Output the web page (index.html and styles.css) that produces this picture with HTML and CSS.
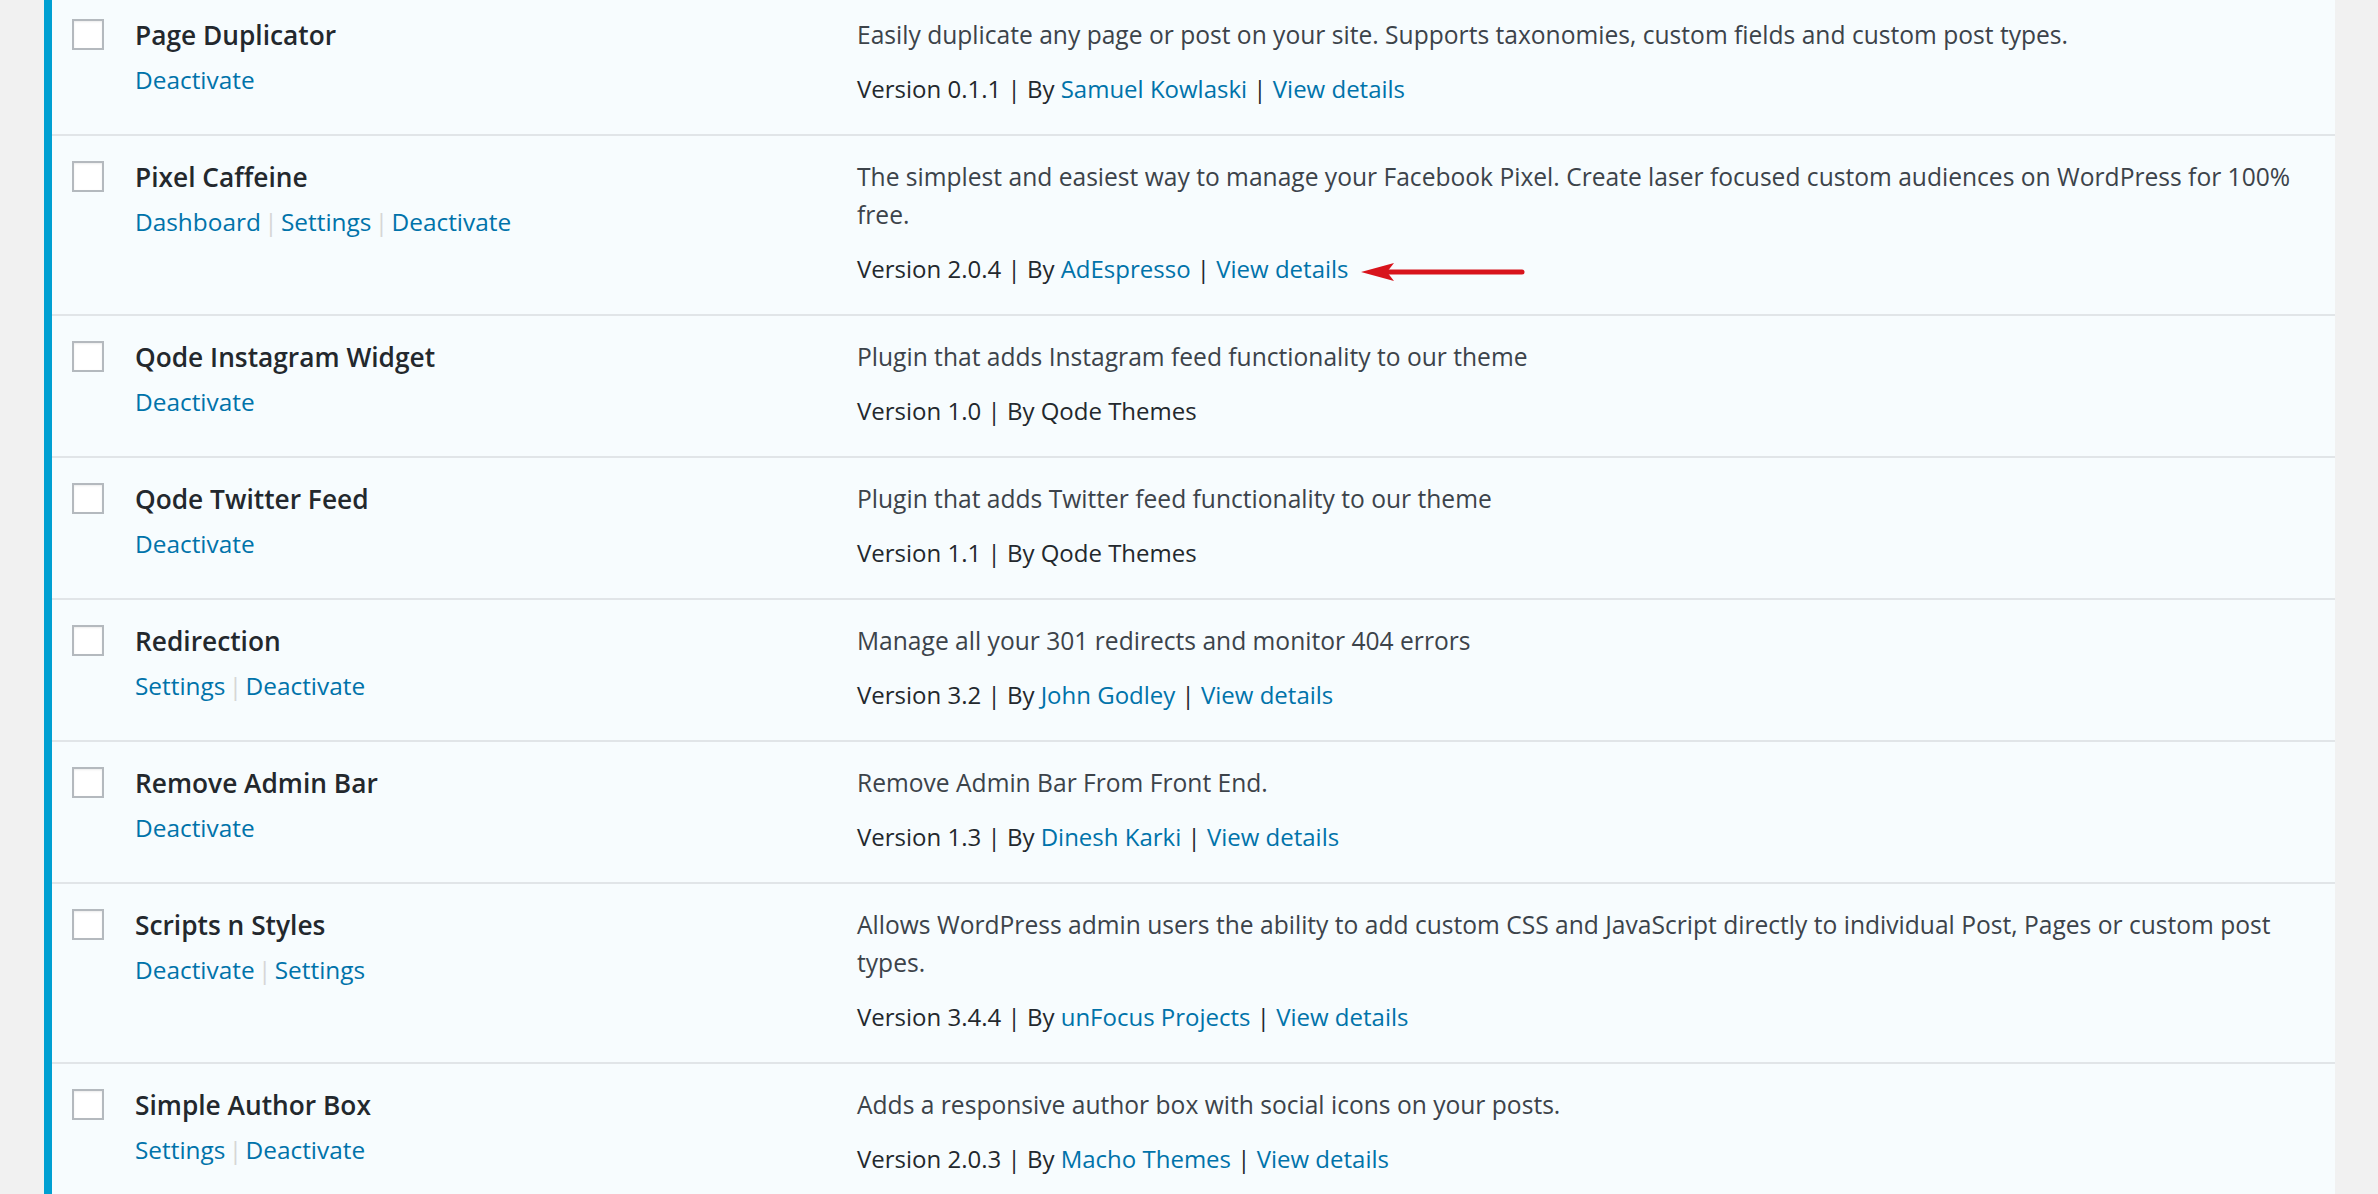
FILE: index.html
```html
<!DOCTYPE html>
<html lang="en">
<head>
<meta charset="utf-8">
<title>Plugins</title>
<link rel="stylesheet" href="styles.css">
</head>
<body>
<div class="plugins">
  <div class="plugin">
    <div class="check-col"><input type="checkbox" class="check"></div>
    <div class="title-col">
      <strong class="name">Page Duplicator</strong>
      <div class="actions"><a href="#">Deactivate</a></div>
    </div>
    <div class="desc-col">
      <p class="desc">Easily duplicate any page or post on your site. Supports taxonomies, custom fields and custom post types.</p>
      <div class="meta">Version 0.1.1 | By <a href="#">Samuel Kowlaski</a> | <a href="#">View details</a></div>
    </div>
  </div>

  <div class="plugin">
    <div class="check-col"><input type="checkbox" class="check"></div>
    <div class="title-col">
      <strong class="name">Pixel Caffeine</strong>
      <div class="actions"><a href="#">Dashboard</a> <span class="sep">|</span> <a href="#">Settings</a> <span class="sep">|</span> <a href="#">Deactivate</a></div>
    </div>
    <div class="desc-col">
      <p class="desc">The simplest and easiest way to manage your Facebook Pixel. Create laser focused custom audiences on WordPress for 100% free.</p>
      <div class="meta">Version 2.0.4 | By <a href="#">AdEspresso</a> | <a href="#">View details</a><svg class="arrow" width="164" height="22" viewBox="0 0 164 22"><path d="M0 11 L33 2 L26 11 L33 20 Z" fill="#d8141c"/><line x1="24" y1="11" x2="161" y2="11" stroke="#d8141c" stroke-width="5" stroke-linecap="round"/></svg></div>
    </div>
  </div>

  <div class="plugin">
    <div class="check-col"><input type="checkbox" class="check"></div>
    <div class="title-col">
      <strong class="name">Qode Instagram Widget</strong>
      <div class="actions"><a href="#">Deactivate</a></div>
    </div>
    <div class="desc-col">
      <p class="desc">Plugin that adds Instagram feed functionality to our theme</p>
      <div class="meta">Version 1.0 | By Qode Themes</div>
    </div>
  </div>

  <div class="plugin">
    <div class="check-col"><input type="checkbox" class="check"></div>
    <div class="title-col">
      <strong class="name">Qode Twitter Feed</strong>
      <div class="actions"><a href="#">Deactivate</a></div>
    </div>
    <div class="desc-col">
      <p class="desc">Plugin that adds Twitter feed functionality to our theme</p>
      <div class="meta">Version 1.1 | By Qode Themes</div>
    </div>
  </div>

  <div class="plugin">
    <div class="check-col"><input type="checkbox" class="check"></div>
    <div class="title-col">
      <strong class="name">Redirection</strong>
      <div class="actions"><a href="#">Settings</a> <span class="sep">|</span> <a href="#">Deactivate</a></div>
    </div>
    <div class="desc-col">
      <p class="desc">Manage all your 301 redirects and monitor 404 errors</p>
      <div class="meta">Version 3.2 | By <a href="#">John Godley</a> | <a href="#">View details</a></div>
    </div>
  </div>

  <div class="plugin">
    <div class="check-col"><input type="checkbox" class="check"></div>
    <div class="title-col">
      <strong class="name">Remove Admin Bar</strong>
      <div class="actions"><a href="#">Deactivate</a></div>
    </div>
    <div class="desc-col">
      <p class="desc">Remove Admin Bar From Front End.</p>
      <div class="meta">Version 1.3 | By <a href="#">Dinesh Karki</a> | <a href="#">View details</a></div>
    </div>
  </div>

  <div class="plugin">
    <div class="check-col"><input type="checkbox" class="check"></div>
    <div class="title-col">
      <strong class="name">Scripts n Styles</strong>
      <div class="actions"><a href="#">Deactivate</a> <span class="sep">|</span> <a href="#">Settings</a></div>
    </div>
    <div class="desc-col">
      <p class="desc">Allows WordPress admin users the ability to add custom CSS and JavaScript directly to individual Post, Pages or custom post types.</p>
      <div class="meta">Version 3.4.4 | By <a href="#">unFocus Projects</a> | <a href="#">View details</a></div>
    </div>
  </div>

  <div class="plugin">
    <div class="check-col"><input type="checkbox" class="check"></div>
    <div class="title-col">
      <strong class="name">Simple Author Box</strong>
      <div class="actions"><a href="#">Settings</a> <span class="sep">|</span> <a href="#">Deactivate</a></div>
    </div>
    <div class="desc-col">
      <p class="desc">Adds a responsive author box with social icons on your posts.</p>
      <div class="meta">Version 2.0.3 | By <a href="#">Macho Themes</a> | <a href="#">View details</a></div>
    </div>
  </div>
</div>
</body>
</html>
```
FILE: styles.css
```css
html, body {
  margin: 0;
  padding: 0;
  background: #f1f1f1;
  font-family: "Open Sans", "Noto Sans", sans-serif;
  overflow: hidden;
}

.plugins {
  margin: -6px 43px 0 44px;
  border-left: 8px solid #00a0d2;
  background: #f7fcfe;
}

.plugin {
  display: grid;
  grid-template-columns: 83px 722px 1fr;
  padding: 22px 10px 28px 0;
  box-shadow: inset 0 -2px 0 #e1e5e8;
}

.check-col {
  display: flex;
  align-items: flex-start;
}

.check {
  appearance: none;
  -webkit-appearance: none;
  box-sizing: border-box;
  width: 32px;
  height: 31px;
  margin: 3px 0 0 20px;
  border: 2px solid #b4b9be;
  background: #fff;
  box-shadow: inset 0 1px 2px rgba(0, 0, 0, 0.08);
}

.name {
  display: block;
  font-size: 26.3px;
  font-weight: 600;
  line-height: 38px;
  color: #23282d;
  margin-bottom: 7px;
}

.actions {
  font-size: 24.4px;
  line-height: 38px;
  color: #ddd;
  word-spacing: -3px;
}

a {
  color: #0073aa;
  text-decoration: none;
}

.sep {
  color: #d6d6d6;
}

.desc {
  margin: 0 0 16px;
  font-size: 24.6px;
  line-height: 38px;
  color: #3c434a;
}

.meta {
  font-size: 24px;
  line-height: 38px;
  color: #23282d;
}

.arrow {
  vertical-align: middle;
  margin-left: 12px;
}
```
